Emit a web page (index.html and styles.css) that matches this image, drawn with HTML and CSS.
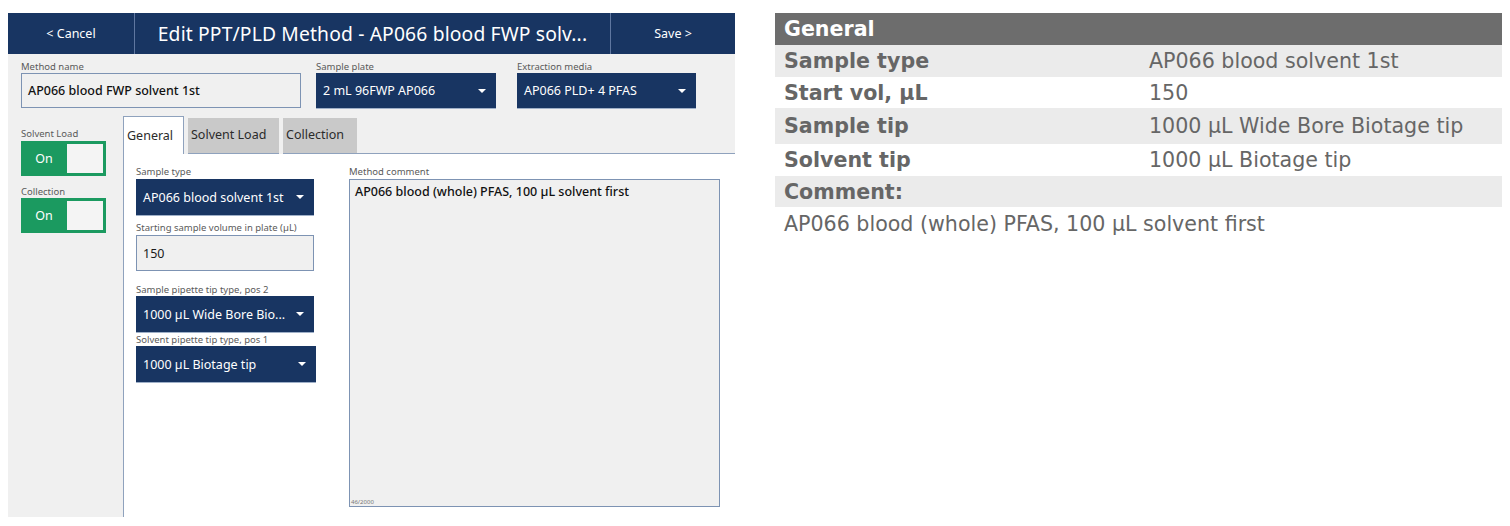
FILE: index.html
```html
<!DOCTYPE html>
<html>
<head>
<meta charset="utf-8">
<link rel="stylesheet" href="styles.css">
</head>
<body>
<div class="page">
  <div class="app">
    <div class="topbar">
      <div class="nav nav-cancel">&lt; Cancel</div>
      <div class="title">Edit PPT/PLD Method - AP066 blood FWP solv...</div>
      <div class="nav nav-save">Save &gt;</div>
    </div>
    <div class="app-body">
      <div class="top-fields">
        <div class="field f-name">
          <div class="label">Method name</div>
          <div class="input input-bold">AP066 blood FWP solvent 1st</div>
        </div>
        <div class="field f-plate">
          <div class="label">Sample plate</div>
          <div class="select"><span>2 mL 96FWP AP066</span><i class="caret"></i></div>
        </div>
        <div class="field f-media">
          <div class="label">Extraction media</div>
          <div class="select"><span>AP066 PLD+ 4 PFAS</span><i class="caret"></i></div>
        </div>
      </div>
      <div class="main">
        <div class="sidebar">
          <div class="label">Solvent Load</div>
          <div class="toggle"><span class="toggle-text">On</span><span class="knob"></span></div>
          <div class="label l-coll">Collection</div>
          <div class="toggle"><span class="toggle-text">On</span><span class="knob"></span></div>
        </div>
        <div class="tabs-area">
          <div class="tabs">
            <div class="tab active">General</div>
            <div class="tab t-solvent">Solvent Load</div>
            <div class="tab t-collection">Collection</div>
            <div class="tab-rest"></div>
          </div>
          <div class="panel">
            <div class="col-left">
              <div class="label">Sample type</div>
              <div class="select"><span>AP066 blood solvent 1st</span><i class="caret"></i></div>
              <div class="label l-start">Starting sample volume in plate (µL)</div>
              <div class="input">150</div>
              <div class="label l-gap">Sample pipette tip type, pos 2</div>
              <div class="select"><span>1000 µL Wide Bore Bio...</span><i class="caret"></i></div>
              <div class="label l-tight">Solvent pipette tip type, pos 1</div>
              <div class="select sel-wide"><span>1000 µL Biotage tip</span><i class="caret"></i></div>
            </div>
            <div class="col-right">
              <div class="label">Method comment</div>
              <div class="textarea">
                <div class="ta-text">AP066 blood (whole) PFAS, 100 µL solvent first</div>
                <div class="ta-count">46/2000</div>
              </div>
            </div>
          </div>
        </div>
      </div>
    </div>
  </div>

  <table class="summary">
    <tr class="head"><td colspan="2">General</td></tr>
    <tr class="shade"><th>Sample type</th><td>AP066 blood solvent 1st</td></tr>
    <tr class="r31"><th>Start vol, µL</th><td>150</td></tr>
    <tr class="shade r36"><th>Sample tip</th><td>1000 µL Wide Bore Biotage tip</td></tr>
    <tr><th>Solvent tip</th><td>1000 µL Biotage tip</td></tr>
    <tr class="shade r31"><th colspan="2">Comment:</th></tr>
    <tr class="r33"><td colspan="2" class="comment">AP066 blood (whole) PFAS, 100 µL solvent first</td></tr>
  </table>
</div>
</body>
</html>
```
FILE: styles.css
```css
* { box-sizing: border-box; }
html, body { margin: 0; padding: 0; background: #ffffff; }
.page {
  display: flex;
  align-items: flex-start;
  gap: 40px;
  padding: 13px 8px 0 8px;
}

/* ---------- left app ---------- */
.app {
  width: 727px;
  height: 504px;
  display: flex;
  flex-direction: column;
  font-family: "Noto Sans", "Open Sans", sans-serif;
  background: #f0f0f0;
}
.topbar {
  height: 41px;
  display: flex;
  background: #183562;
  color: #ffffff;
}
.nav {
  display: flex;
  align-items: center;
  justify-content: center;
  font-size: 12.5px;
}
.nav-cancel { width: 127px; border-right: 1px solid #5f77a0; }
.nav-save { width: 125px; border-left: 1px solid #5f77a0; }
.title {
  flex: 1;
  display: flex;
  align-items: center;
  justify-content: center;
  font-size: 19.3px;
  letter-spacing: 0.15px;
}
.app-body {
  flex: 1;
  display: flex;
  flex-direction: column;
}
.label {
  font-size: 9.5px;
  color: #5a5a5a;
  line-height: 12px;
  height: 12px;
  margin-bottom: 1px;
  white-space: nowrap;
}
.top-fields {
  display: flex;
  padding: 7px 0 0 13px;
  height: 62px;
}
.top-fields .label { margin-bottom: 0; }
.f-name { width: 280px; margin-right: 15px; }
.f-plate { width: 180px; margin-right: 21px; }
.f-media { width: 179px; }
.input {
  height: 35px;
  border: 1px solid #7d93b3;
  background: #f0f0f0;
  display: flex;
  align-items: center;
  padding-left: 6px;
  font-size: 12.5px;
  color: #1a1a1a;
}
.input-bold { font-weight: 500; color: #111; }
.select {
  height: 35px;
  background: #183562;
  color: #ffffff;
  display: flex;
  align-items: center;
  justify-content: space-between;
  padding: 0 10px 0 7px;
  font-size: 12.5px;
  box-shadow: 0 1px 0 #9fb0c8;
}
.caret {
  width: 0; height: 0;
  border-left: 4px solid transparent;
  border-right: 4px solid transparent;
  border-top: 4px solid #ffffff;
}
.main {
  flex: 1;
  display: flex;
}
.sidebar {
  width: 115px;
  padding: 12px 0 0 13px;
}
.toggle {
  width: 85px;
  height: 35px;
  background: #1b9a60;
  display: flex;
  align-items: center;
  padding: 3px 3px 3px 0;
  margin-bottom: 10px;
  color: #ffffff;
}
.l-coll { margin-bottom: 0; }
.toggle-text {
  width: 46px;
  text-align: center;
  font-size: 12.5px;
}
.knob {
  width: 36px;
  height: 29px;
  background: #f4f4f4;
}
.tabs-area {
  flex: 1;
  display: flex;
  flex-direction: column;
}
.tabs {
  display: flex;
  align-items: flex-end;
  height: 38px;
}
.tab {
  height: 36px;
  background: #c9c9c9;
  font-size: 12.5px;
  color: #2b2b2b;
  padding: 8px 0 0 3px;
  margin-left: 4px;
  border-bottom: 1px solid #8fa2bd;
}
.t-solvent { width: 91px; }
.t-collection { width: 74px; }
.tab.active {
  margin-left: 0;
  height: 38px;
  background: #ffffff;
  border: 1px solid #8fa2bd;
  border-bottom: none;
  padding: 10px 0 0 3px;
  width: 61px;
}
.tab-rest {
  flex: 1;
  border-bottom: 1px solid #8fa2bd;
}
.panel {
  flex: 1;
  background: #ffffff;
  border-left: 1px solid #8fa2bd;
  display: flex;
  padding: 12px 15px 10px 12px;
}
.col-left { width: 180px; }
.col-left .select { width: 178px; height: 36px; }
.col-left .select:nth-of-type(1) { height: 35px; }
.col-left .select.sel-wide { width: 180px; }
.col-left .input { width: 178px; height: 36px; }
.l-start { margin-top: 7px; }
.l-gap { margin-top: 13px; margin-bottom: 0; }
.l-tight { margin-top: 2px; margin-bottom: 0; }
.col-right {
  margin-left: 33px;
  flex: 1;
  display: flex;
  flex-direction: column;
}
.textarea {
  flex: 1;
  border: 1px solid #7d93b3;
  background: #f0f0f0;
  position: relative;
  padding: 3px 5px;
}
.ta-text {
  font-size: 12.5px;
  font-weight: 500;
  color: #111;
}
.ta-count {
  position: absolute;
  left: 1px;
  bottom: 0;
  font-size: 6px;
  color: #777;
}

/* ---------- right summary table ---------- */
.summary {
  width: 727px;
  border-collapse: collapse;
  font-family: "DejaVu Sans", Verdana, sans-serif;
  color: #666666;
  font-size: 20.6px;
}
.summary td, .summary th {
  height: 32px;
  padding: 0 0 0 9px;
  text-align: left;
  vertical-align: middle;
}
.summary th { font-weight: bold; width: 365px; }
.summary tr.head td {
  background: #6d6d6d;
  color: #ffffff;
  font-weight: bold;
}
.summary tr.shade th, .summary tr.shade td { background: #ebebeb; }
.summary tr.r31 td, .summary tr.r31 th { height: 31px; }
.summary tr.r36 td, .summary tr.r36 th { height: 36px; }
.summary tr.r33 td, .summary tr.r33 th { height: 33px; }
```
